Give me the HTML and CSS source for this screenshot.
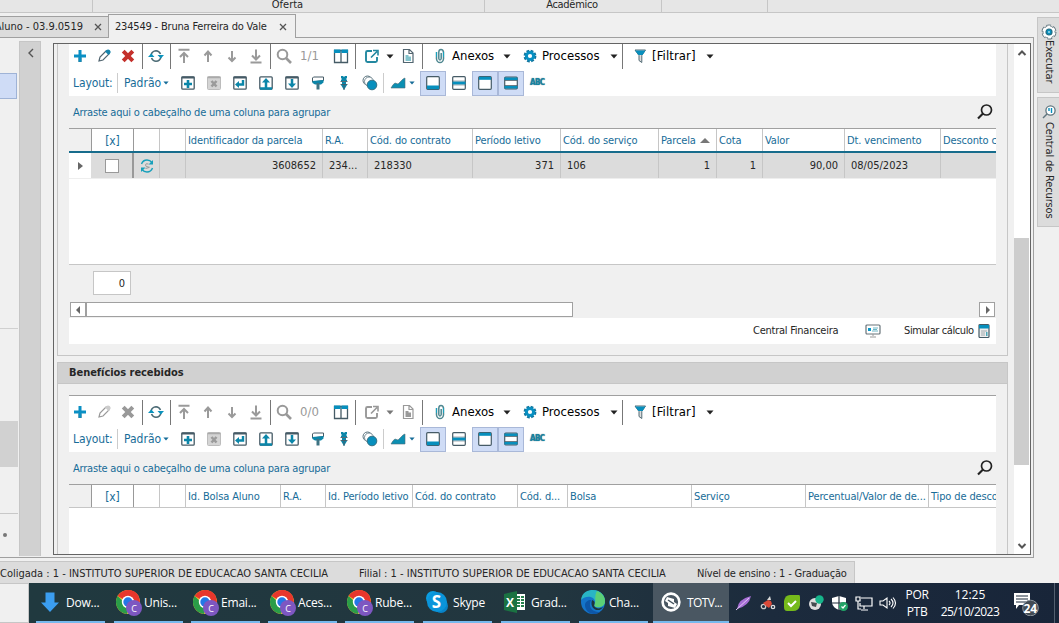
FILE: index.html
```
<!DOCTYPE html>
<html lang="pt-BR">
<head>
<meta charset="utf-8">
<title>234549 - Bruna Ferreira do Vale</title>
<link rel="stylesheet" href="styles.css">
</head>
<body>
<svg class="defs" aria-hidden="true">
  <symbol id="plus" viewBox="0 0 16 16"><path d="M8 2v12M2 8h12" stroke="#0a8fc4" stroke-width="3"/><path d="M6.5 9.5v4h3v-4" fill="none" stroke="#2c7f9b" stroke-width=".5"/></symbol>
  <symbol id="pencil" viewBox="0 0 16 16"><path d="M3 13l1-4 6-6q2-1 3 0t0 3l-6 6z" fill="#fff" stroke="currentColor" stroke-width="1.2"/><path class="tip" d="M9 3.5l1.500-1.500q2-1 3.500.500t0 3L12.500 7z"/></symbol>
  <symbol id="cross" viewBox="0 0 16 16"><path d="M3.200 3.200l9.600 9.600M12.800 3.200l-9.600 9.600" stroke="currentColor" stroke-width="4"/></symbol>
  <symbol id="refresh" viewBox="0 0 16 16"><path d="M3 7q1-4 5-4.300 3 0 4.500 3.300M13 9q-1 4-5 4.300-3 0-4.500-3.300" fill="none" stroke="#4b6a74" stroke-width="1.500"/><path d="M9.500 7h6.500l-3.200 3.500zM0 9h6.500L3.300 5.500z" fill="#0b93bd"/></symbol>
  <symbol id="up" viewBox="0 0 16 16"><path d="M8 14V4M4.500 7.500L8 3.500l3.500 4" fill="none" stroke="#9a9a9a" stroke-width="2"/></symbol>
  <symbol id="down" viewBox="0 0 16 16"><path d="M8 3v10M4.500 9.500L8 13l3.500-3.500" fill="none" stroke="#9a9a9a" stroke-width="2"/></symbol>
  <symbol id="first" viewBox="0 0 16 16"><path d="M2.500 1.800h11M8 15V5M4 9l4-4 4 4" fill="none" stroke="#9a9a9a" stroke-width="2"/></symbol>
  <symbol id="last" viewBox="0 0 16 16"><path d="M2.500 14.500h11M8 1.500v10M4 7.500l4 4 4-4" fill="none" stroke="#9a9a9a" stroke-width="2"/></symbol>
  <symbol id="mag" viewBox="0 0 16 16"><circle cx="6.500" cy="6.500" r="4.800" fill="none" stroke="#999" stroke-width="2"/><path d="M10 10l5 5" stroke="#999" stroke-width="2.600"/></symbol>
  <symbol id="cols" viewBox="0 0 16 16"><path d="M1.500 2.500h13v12h-13zM8 3v11" fill="#fff" stroke="#455b66" stroke-width="1.300"/><path d="M1 1.500h6.500V5H1zM8.500 1.500H15V5H8.500z" fill="#078fbd"/></symbol>
  <symbol id="export" viewBox="0 0 16 16"><path d="M8 3H3.500Q2 3 2 4.500v8Q2 14 3.500 14h8q1.500 0 1.500-1.500V9" fill="none" stroke="currentColor" stroke-width="1.900"/><path d="M7 9.500l6-6M9 2.500h5v5" fill="none" stroke="currentColor" stroke-width="1.600"/></symbol>
  <symbol id="doc" viewBox="0 0 16 16"><path d="M3.500 1.500h6l3.500 3.500v9.500H3.500zM9 2v3.500h4" fill="#fff" stroke="currentColor" stroke-width="1.200"/><path class="tip" d="M5.500 7h3v1.500H11V13H5.500z"/></symbol>
  <symbol id="clip" viewBox="0 0 16 16"><path d="M4.500 4v7q.500 3.500 3.500 3.500t3.500-3.500V4q-.500-2.500-2.500-2.500T6.800 4v6.500q.200 1.500 1.200 1.500t1.200-1.500V5" fill="none" stroke="#4f8790" stroke-width="1.500"/><path d="M4.500 4v5M11.500 4v5" stroke="#17a2bf" stroke-width="1"/></symbol>
  <symbol id="gear" viewBox="0 0 16 16"><circle cx="8" cy="8" r="5" fill="none" stroke="#11759d" stroke-width="2.800" stroke-dasharray="2.600 1.327"/><circle cx="8" cy="8" r="3.600" fill="none" stroke="#078fc2" stroke-width="3"/></symbol>
  <symbol id="funnel" viewBox="0 0 16 16"><path d="M3 2h10.500L9.800 7.500v7L7 12.500v-5z" fill="#ddd" stroke="#536b75"/><path d="M3 2.500h10.500L10.500 7h-4z" fill="#078fbd"/></symbol>
  <symbol id="caret" viewBox="0 0 8 5"><path d="M.500.500h7L4 4.500z" fill="currentColor"/></symbol>
  <symbol id="lnew" viewBox="0 0 16 16"><rect x="1.800" y="1.800" width="12.400" height="12.400" rx="1" fill="#fff" stroke="#465b66" stroke-width="1.300"/><path d="M1.500 2.500h13" stroke="#465b66" stroke-width="2"/><path d="M8 5v8M4 9h8" stroke="#0b86a9" stroke-width="2.600"/></symbol>
  <symbol id="ldel" viewBox="0 0 16 16"><rect x="1.500" y="1.500" width="13" height="13" rx="1" fill="#d4d4d4" stroke="#bcbcbc"/><path d="M1.500 2.500h13" stroke="#aaa" stroke-width="1.500"/><path d="M5.500 6l5 5.500M10.500 6l-5 5.500" stroke="#9b9b9b" stroke-width="2.600"/></symbol>
  <symbol id="lret" viewBox="0 0 16 16"><rect x="1.800" y="1.800" width="12.400" height="12.400" rx="1" fill="#fff" stroke="#465b66" stroke-width="1.300"/><path d="M1.500 2.500h13" stroke="#465b66" stroke-width="2"/><path d="M11 5v4.500H6" fill="none" stroke="#0b86a9" stroke-width="2.400"/><path d="M3 9.500L7 6v7z" fill="#0b86a9"/></symbol>
  <symbol id="lup" viewBox="0 0 16 16"><rect x="1.800" y="1.800" width="12.400" height="12.400" rx="1" fill="#fff" stroke="#465b66" stroke-width="1.300"/><path d="M2 13.500h12M8 13V7" stroke="#0b86a9" stroke-width="2.500"/><path d="M4 7.500L8 3l4 4.500z" fill="#0b86a9"/></symbol>
  <symbol id="ldown" viewBox="0 0 16 16"><rect x="1.800" y="1.800" width="12.400" height="12.400" rx="1" fill="#fff" stroke="#465b66" stroke-width="1.300"/><path d="M1.500 2.500h13" stroke="#465b66" stroke-width="2"/><path d="M8 4v5" stroke="#0b86a9" stroke-width="2.500"/><path d="M4 8.500L8 13l4-4.500z" fill="#0b86a9"/></symbol>
  <symbol id="brush" viewBox="0 0 16 16"><path d="M3.500 2h10v3.500l-11 1.500V3z" fill="#fff" stroke="#465b66"/><path d="M2.500 6L13.500 5v2.500L11 9.500H5L2.500 8z" fill="#0b86a9"/><path d="M8 8v6.500" stroke="#3e7383" stroke-width="3"/></symbol>
  <symbol id="pin" viewBox="0 0 16 16"><path d="M5 1h2l1 1 1-1h2v2L10 4l1 1v1H5V5l1-1-1-1zM6 7h4v2l1 1-3 5-3-5 1-1z" fill="#0b86a9"/><path d="M4.500 6.500h7M4.500 9.500h7M8 9v6" stroke="#465b66" stroke-width=".9"/></symbol>
  <symbol id="circles" viewBox="0 0 16 16"><circle cx="5.500" cy="5.500" r="4.500" fill="#fff" stroke="#58717c"/><circle cx="7" cy="6.500" r="4.500" fill="#fff" stroke="#58717c" stroke-width=".8"/><circle cx="10" cy="10" r="4.800" fill="#078fbd" stroke="#357083"/></symbol>
  <symbol id="chart" viewBox="0 0 16 16"><path d="M1 13q2-4 4-5l3 1 5-5 2-1v10z" fill="#0c8fb2" stroke="#4e6d79" stroke-width=".6"/></symbol>
  <symbol id="pbot" viewBox="0 0 16 16"><rect x="1.700" y="1.700" width="12.600" height="12.600" rx="1" fill="#fff" stroke="#465b66" stroke-width="1.200"/><path d="M2 10.500h12v3.700H2z" fill="#078fbd"/></symbol>
  <symbol id="pmid" viewBox="0 0 16 16"><rect x="1.700" y="1.700" width="12.600" height="12.600" rx="1" fill="#fff" stroke="#465b66" stroke-width="1.200"/><path d="M1.500 6.500h13v3h-13z" fill="#078fbd"/><path d="M1.500 6h13M1.500 10h13" stroke="#465b66" stroke-width=".5"/></symbol>
  <symbol id="ptop" viewBox="0 0 16 16"><rect x="1.700" y="1.700" width="12.600" height="12.600" rx="1" fill="#fff" stroke="#465b66" stroke-width="1.200"/><path d="M2 1.800h12v3H2z" fill="#078fbd"/></symbol>
  <symbol id="prows" viewBox="0 0 16 16"><rect x="1.700" y="2.200" width="12.600" height="11.600" rx="1" fill="#fff" stroke="#465b66" stroke-width="1.200"/><path d="M1.500 2.500h13V5h-13zM1.500 11h13v2.500h-13z" fill="#078fbd"/><path d="M2 5.500h12M2 10.500h12" stroke="#465b66" stroke-width=".8"/></symbol>
  <symbol id="find" viewBox="0 0 18 18"><circle cx="10.500" cy="7" r="5" fill="none" stroke="#222" stroke-width="1.700"/><path d="M7 10.500l-5 5" stroke="#222" stroke-width="2.200"/></symbol>
  <symbol id="chrome" viewBox="0 0 28 28"><circle cx="13" cy="13" r="12" fill="#fbc02d"/><path d="M13 13H25A12 12 0 0 0 2.600 7z" fill="#e8372c"/><path d="M13 1A12 12 0 0 1 24 8H13z" fill="#e8372c"/><path d="M2.600 7A12 12 0 0 0 12 25l3-10-5-1z" fill="#2a9d48"/><circle cx="13" cy="13" r="6.200" fill="#fff"/><circle cx="13" cy="13" r="4.700" fill="#2378e6"/><circle cx="19" cy="19" r="8" fill="#7d57c1"/></symbol>
</svg>

<div class="ribbon">
  <div class="rb rb1"></div><div class="rb rb2"><span>Oferta</span></div><div class="rb rb3"><span>Acadêmico</span></div><div class="rb rb4"></div>
</div>

<div class="workspace">
  <div class="doc">
    <div class="tabs">
      <div class="tab old"><span>Aluno - 03.9.0519</span><svg viewBox="0 0 8 8"><path d="M1 1l6 6M7 1L1 7"/></svg></div>
      <div class="tab cur"><span>234549 - Bruna Ferreira do Vale</span><svg viewBox="0 0 8 8"><path d="M1 1l6 6M7 1L1 7"/></svg></div>
      <div class="tabline"></div>
    </div>
    <div class="docbody">
      <div class="nav"><div class="nav-sel"></div><div class="nav-grey"></div><div class="nav-line"></div><div class="nav-dot"></div></div>
      <div class="collapse"><svg viewBox="0 0 8 10"><path d="M6 1L2 5l4 4"/></svg></div>
      <div class="frame">
        <div class="view">
          <section class="group g1">
            <div class="tools">
              <div class="row r1">
                <i class="add"><svg><use href="#plus"/></svg></i><i class="steel"><svg><use href="#pencil"/></svg></i><i class="red"><svg><use href="#cross"/></svg></i><b></b>
                <i><svg><use href="#refresh"/></svg></i><b></b>
                <i><svg><use href="#first"/></svg></i><i><svg><use href="#up"/></svg></i><i><svg><use href="#down"/></svg></i><i><svg><use href="#last"/></svg></i><b></b>
                <i><svg><use href="#mag"/></svg></i><span class="count">1/1</span><i><svg><use href="#cols"/></svg></i><b class="wide"></b>
                <i class="teal"><svg><use href="#export"/></svg></i><em><svg><use href="#caret"/></svg></em><i class="docu"><svg><use href="#doc"/></svg></i><b class="wide more"></b>
                <i><svg><use href="#clip"/></svg></i><span class="t anexos">Anexos</span><em class="e1"><svg><use href="#caret"/></svg></em>
                <i><svg><use href="#gear"/></svg></i><span class="t proc">Processos</span><em class="e2"><svg><use href="#caret"/></svg></em><b class="wide more"></b>
                <i><svg><use href="#funnel"/></svg></i><span class="t filt">[Filtrar]</span><em><svg><use href="#caret"/></svg></em>
              </div>
              <div class="row r2">
                <span class="lay">Layout:</span><u></u><span class="pad">Padrão</span><em class="blue"><svg><use href="#caret"/></svg></em>
                <i><svg><use href="#lnew"/></svg></i><i><svg><use href="#ldel"/></svg></i><i><svg><use href="#lret"/></svg></i><i><svg><use href="#lup"/></svg></i><i><svg><use href="#ldown"/></svg></i><i><svg><use href="#brush"/></svg></i><i><svg><use href="#pin"/></svg></i><i><svg><use href="#circles"/></svg></i><u class="tight"></u>
                <i class="chart"><svg><use href="#chart"/></svg></i><em class="blue e3"><svg><use href="#caret"/></svg></em>
                <i class="on"><svg><use href="#pbot"/></svg></i><i><svg><use href="#pmid"/></svg></i><i class="on"><svg><use href="#ptop"/></svg></i><i class="on"><svg><use href="#prows"/></svg></i><span class="abc">ABC</span>
              </div>
            </div>
            <div class="grouper"><span>Arraste aqui o cabeçalho de uma coluna para agrupar</span><svg><use href="#find"/></svg></div>
            <div class="grid grid1">
              <div class="hd cells"><div class="ind"></div><div class="xx">[x]</div><div></div><div></div><div>Identificador da parcela</div><div>R.A.</div><div>Cód. do contrato</div><div>Período letivo</div><div>Cód. do serviço</div><div class="sorted">Parcela<svg viewBox="0 0 10 5"><path d="M0 5L5 0l5 5z"/></svg></div><div>Cota</div><div>Valor</div><div>Dt. vencimento</div><div>Desconto c</div></div>
              <div class="data cells"><div class="ind"><svg viewBox="0 0 5 8"><path d="M0 0l5 4-5 4z"/></svg></div><div class="xx"><span class="check"></span></div><div class="sync"><svg viewBox="0 0 16 16"><path d="M2.500 6Q4 2 8 2q3 0 5 2.500M13.500 10Q12 14 8 14q-3 0-5-2.500" fill="none" stroke="#18a0bb" stroke-width="1.400"/><path d="M14 2v4.500H9.500zM2 14V9.500h4.500z" fill="#18a0bb"/><path d="M9.500 6Q6.500 5 6.500 7t3 2-3 1.500" fill="none" stroke="#999" stroke-width="1"/></svg></div><div></div><div class="num">3608652</div><div>234...</div><div>218330</div><div class="num">371</div><div>106</div><div class="num">1</div><div class="num">1</div><div class="num">90,00</div><div>08/05/2023</div><div></div></div>
            </div>
            <div class="foot"><div class="total">0</div>
              <div class="hscroll"><span class="arr"><svg viewBox="0 0 5 8"><path d="M4 0L0 4l4 4z"/></svg></span><span class="hthumb"></span><span class="arr end"><svg viewBox="0 0 5 8"><path d="M1 0l4 4-4 4z"/></svg></span></div>
            </div>
            <div class="actions"><span class="cf">Central Financeira</span>
              <svg class="mon" viewBox="0 0 16 14"><rect x="1" y="1" width="14" height="9" rx="1" fill="#fff" stroke="#68747a" stroke-width="1.200"/><path d="M3 4h3v3H3z" fill="#0a98c8"/><path d="M8 4h5M7 7h6M8 5.500h4" stroke="#6cb7c7"/><path d="M8 10v2M5 13h6" stroke="#999"/></svg>
              <span class="sc">Simular cálculo</span>
              <svg class="calc" viewBox="0 0 12 16"><rect x="1" y="1.500" width="10" height="13" rx="1" fill="#eee" stroke="#455b66" stroke-width="1.200"/><path d="M1 2h10v3.500H1z" fill="#078fbd"/><path d="M3 8h6M3 10h4M3 12h4" stroke="#8a979c" stroke-width=".8"/><path d="M8 9h1.500v4H8z" fill="#4ca8ba"/></svg>
            </div>
          </section>
          <section class="group g2">
            <h2>Benefícios recebidos</h2>
            <div class="tools">
              <div class="row r1">
                <i class="add"><svg><use href="#plus"/></svg></i><i class="dis hollow"><svg><use href="#pencil"/></svg></i><i class="dis"><svg><use href="#cross"/></svg></i><b></b>
                <i><svg><use href="#refresh"/></svg></i><b></b>
                <i><svg><use href="#first"/></svg></i><i><svg><use href="#up"/></svg></i><i><svg><use href="#down"/></svg></i><i><svg><use href="#last"/></svg></i><b></b>
                <i><svg><use href="#mag"/></svg></i><span class="count">0/0</span><i><svg><use href="#cols"/></svg></i><b class="wide"></b>
                <i class="dis"><svg><use href="#export"/></svg></i><em class="dim"><svg><use href="#caret"/></svg></em><i class="docu dis"><svg><use href="#doc"/></svg></i><b class="wide more"></b>
                <i><svg><use href="#clip"/></svg></i><span class="t anexos">Anexos</span><em class="e1"><svg><use href="#caret"/></svg></em>
                <i><svg><use href="#gear"/></svg></i><span class="t proc">Processos</span><em class="e2"><svg><use href="#caret"/></svg></em><b class="wide more"></b>
                <i><svg><use href="#funnel"/></svg></i><span class="t filt">[Filtrar]</span><em><svg><use href="#caret"/></svg></em>
              </div>
              <div class="row r2">
                <span class="lay">Layout:</span><u></u><span class="pad">Padrão</span><em class="blue"><svg><use href="#caret"/></svg></em>
                <i><svg><use href="#lnew"/></svg></i><i><svg><use href="#ldel"/></svg></i><i><svg><use href="#lret"/></svg></i><i><svg><use href="#lup"/></svg></i><i><svg><use href="#ldown"/></svg></i><i><svg><use href="#brush"/></svg></i><i><svg><use href="#pin"/></svg></i><i><svg><use href="#circles"/></svg></i><u class="tight"></u>
                <i class="chart"><svg><use href="#chart"/></svg></i><em class="blue e3"><svg><use href="#caret"/></svg></em>
                <i class="on"><svg><use href="#pbot"/></svg></i><i><svg><use href="#pmid"/></svg></i><i class="on"><svg><use href="#ptop"/></svg></i><i class="on"><svg><use href="#prows"/></svg></i><span class="abc">ABC</span>
              </div>
            </div>
            <div class="grouper"><span>Arraste aqui o cabeçalho de uma coluna para agrupar</span><svg><use href="#find"/></svg></div>
            <div class="grid grid2">
              <div class="hd cells"><div class="ind"></div><div class="xx">[x]</div><div></div><div></div><div>Id. Bolsa Aluno</div><div>R.A.</div><div>Id. Período letivo</div><div>Cód. do contrato</div><div>Cód. d...</div><div>Bolsa</div><div>Serviço</div><div>Percentual/Valor de de...</div><div>Tipo de desco</div></div>
            </div>
          </section>
        </div>
        <div class="vscroll"><svg viewBox="0 0 10 6"><path d="M1.500 5L5 1.500 8.500 5"/></svg><div class="vthumb"></div><svg viewBox="0 0 10 6"><path d="M1.500 1L5 4.500 8.500 1"/></svg></div>
      </div>
    </div>
  </div>
  <div class="dock">
    <div class="dtab d1"><svg viewBox="0 0 16 16"><circle cx="8" cy="8" r="6" fill="none" stroke="#60757e" stroke-width="3" stroke-dasharray="4.300 1.983"/><circle cx="8" cy="8" r="6" fill="#fff" stroke="#60757e" stroke-width=".8"/><circle cx="8" cy="8" r="5.800" fill="none" stroke="#fff" stroke-width="1.600" stroke-dasharray="3.300 2.774" stroke-dashoffset="-.5"/><circle cx="8" cy="8" r="3" fill="#078fbd" stroke="#246d83" stroke-width="1.200"/><circle cx="8" cy="8" r="1" fill="#9fdcec"/></svg><span>Executar</span></div>
    <div class="dtab d2"><svg viewBox="0 0 16 16"><circle cx="9.500" cy="6.500" r="4.600" fill="#fff" stroke="#60757e" stroke-width="1.300"/><path d="M6 10l-4 4" stroke="#60757e" stroke-width="1.500"/><path d="M8 4v3M10.500 4v5" stroke="#078fbd" stroke-width="1.400"/></svg><span>Central de Recursos</span></div>
  </div>
</div>

<div class="status"><span class="s1">Coligada : 1 - INSTITUTO SUPERIOR DE EDUCACAO SANTA CECILIA</span><span class="s2">Filial : 1 - INSTITUTO SUPERIOR DE EDUCACAO SANTA CECILIA</span><span class="s3">Nível de ensino : 1 - Graduação</span></div>

<div class="bottom"><div class="stub"></div>
<div class="taskbar">
  <div class="app"><svg viewBox="0 0 28 28"><path d="M9.500 4.500h9v10H23L14 24 5 14.500h4.500z" fill="#3b9ef0"/></svg><span>Dow...</span></div>
  <div class="app n ch"><svg><use href="#chrome"/><text x="16.200" y="22.500" class="badge">C</text></svg><span>Unis...</span></div>
  <div class="app ch"><svg><use href="#chrome"/><text x="16.200" y="22.500" class="badge">C</text></svg><span>Emai...</span></div>
  <div class="app ch"><svg><use href="#chrome"/><text x="16.200" y="22.500" class="badge">C</text></svg><span>Aces...</span></div>
  <div class="app ch"><svg><use href="#chrome"/><text x="16.200" y="22.500" class="badge">C</text></svg><span>Rube...</span></div>
  <div class="app n"><svg viewBox="0 0 28 28"><circle cx="10" cy="10" r="7" fill="#0b9de0"/><circle cx="18" cy="18" r="7" fill="#0883c8"/><circle cx="14" cy="14" r="10" fill="#0a94da"/><text x="8.800" y="20" class="sk">S</text></svg><span>Skype</span></div>
  <div class="app n"><svg viewBox="0 0 28 28"><path d="M15 6h9v16h-9z" fill="#fff"/><path d="M16 8h3v2h-3zm4 0h3v2h-3zm-4 3h3v2h-3zm4 0h3v2h-3zm-4 3h3v2h-3zm4 0h3v2h-3zm-4 3h3v2h-3zm4 0h3v2h-3z" fill="#24804c"/><path d="M3 6l13-3v22L3 22z" fill="#1b7242"/><text x="5" y="18.500" class="xl">X</text></svg><span>Grad...</span></div>
  <div class="app n"><svg viewBox="0 0 28 28"><circle cx="14" cy="14" r="12" fill="#1474c9"/><path d="M2 12C3 4 9 2 14 2c8 0 12 6 12 11s-4 7-9 6c-2-1-2-2-1-4 1-6-8-9-14-3z" fill="#29b5c5"/><path d="M18 3c6 2 8 7 8 10 0 5-4 7-9 6-2-1-2-2-1-4 1-3-1-7 2-12z" fill="#5ccf76"/><path d="M12 12c-3 6 0 12 9 12-7 5-15 0-15-7 0-3 3-5 6-5z" fill="#0d56a7"/><path d="M13 12c3 1 3 3 2 6 2 3 6 3 9 1-3 6-14 3-11-7z" fill="#1e343d"/></svg><span>Cha...</span></div>
  <div class="app active"><svg viewBox="0 0 28 28"><circle cx="14" cy="14" r="8.400" fill="none" stroke="#fff" stroke-width="2.600"/><path d="M10 9l7 2v3l3 2-2 4-7-2v-3l-3-2z" fill="#fff"/><path d="M11 12l6 4" stroke="#46545f" stroke-width="1.500"/></svg><span>TOTV...</span></div>
  <div class="tray">
    <svg viewBox="0 0 18 18"><path d="M2 15Q3 5 16 2 14 12 2 15z" fill="#a66ed5"/><path d="M1 16L14 4" stroke="#e3c9f5" stroke-width="1"/></svg>
    <svg viewBox="0 0 18 18"><circle cx="4.500" cy="12.500" r="2.200" fill="none" stroke="#ccc" stroke-width="1.300"/><circle cx="14" cy="13" r="1.700" fill="none" stroke="#ddd" stroke-width="1.300"/><path d="M4 9l5-3 3 1 1 3-3 4-3-2z" fill="#d94938"/><path d="M8 6l3-4 1 4z" fill="#d9d9d9"/></svg>
    <svg viewBox="0 0 18 18"><path d="M7 1h9q1 0 1 2v8q-1 6-7 6H4q-3 0-3-4V7q1-6 6-6z" fill="#76ba1b"/><path d="M5 9l3 3 5-5" fill="none" stroke="#fff" stroke-width="2"/></svg>
    <svg viewBox="0 0 18 18"><circle cx="8" cy="10" r="6" fill="#ddd"/><path d="M4 8l6 1-1 4-4-1z" fill="#454c50"/><circle cx="12.500" cy="5.500" r="4.200" fill="#16b58b"/></svg>
    <svg viewBox="0 0 18 18"><path d="M8 2l7 2v5q-1 5-7 7-6-2-7-7V4z" fill="#fff"/><path d="M8 2v14M1 9h14" stroke="#1e2d3b" stroke-width="1.200"/><circle cx="12.500" cy="12.500" r="4.500" fill="#21a366"/><path d="M10.500 12.500l1.500 1.500 2.500-3" fill="none" stroke="#fff" stroke-width="1.200"/></svg>
    <svg viewBox="0 0 18 18"><path d="M6 4h11v8H5V9M9 12v3M6 16h7M1 3h4v4H1zM3 7v8h3" fill="none" stroke="#fff" stroke-width="1.200"/></svg>
    <svg viewBox="0 0 18 18"><path d="M1 7h3l4-3v10l-4-3H1zM10 7q2 2 0 4M12 5q4 4 0 8M14 3.500q5 5.500 0 11" fill="none" stroke="#fff" stroke-width="1.100"/></svg>
    <div class="lang"><span>POR</span><span>PTB</span></div>
    <div class="clock"><span>12:25</span><span class="date">25/10/2023</span></div>
    <div class="notif"><svg viewBox="0 0 30 26"><path d="M1 3h16v12H6l-3 4v-4H1z" fill="#fff"/><path d="M3 6h12M3 9h12M3 12h12" stroke="#1b2a3c" stroke-width="1.200"/><circle cx="17.500" cy="18" r="7.800" fill="#424b55" stroke="#8c949c"/><text x="10.500" y="22.500" class="nb">24</text></svg></div>
  </div>
</div></div>
</body>
</html>
```
FILE: styles.css
```
* { box-sizing: border-box; }
body { margin: 0; width: 1059px; height: 623px; overflow: hidden; background: #f0f0f0; color: #262626; font: 11px/14px "DejaVu Sans Condensed", "DejaVu Sans", sans-serif; font-stretch: condensed; display: flex; flex-direction: column; white-space: nowrap; }
svg { display: block; flex: none; }
.defs { position: absolute; width: 0; height: 0; }
i, em { font-style: normal; }

.ribbon { height: 13px; flex: none; display: flex; background: #e6e6e6; border-bottom: 1px solid #c6c6c6; }
.rb { border-right: 1px solid #c6c6c6; text-align: center; line-height: 9px; }
.rb1 { width: 93px; }
.rb2 { width: 392px; padding-right: 2px; }
.rb3 { width: 177px; padding-right: 2px; letter-spacing: -.3px; }
.rb4 { width: 106px; }

.workspace { height: 548px; flex: none; display: flex; }
.doc { width: 1034px; height: 545px; border-right: 1px solid #a0a0a0; border-bottom: 1px solid #a0a0a0; background: #f0f0f0; }
.tabs { height: 25px; display: flex; align-items: flex-end; margin-right: -1px; background: #f0f0f0; }
.tab { display: flex; align-items: center; border: 1px solid #a0a0a0; }
.tab svg { width: 8px; height: 8px; fill: none; stroke: #555; stroke-width: 1.3; }
.tab.old { width: 108px; height: 22px; justify-content: flex-end; background: #dcdcdc; border-left: 0; border-right: 0; padding-right: 6px; gap: 11px; }
.tab.cur { width: 188px; height: 24px; border-bottom: 0; padding-left: 6px; gap: 12px; }
.tab.cur span { letter-spacing: -.19px; }
.tabline { flex: 1; border-bottom: 1px solid #a0a0a0; height: 1px; }
.docbody { display: flex; height: 518px; }
.nav { width: 19px; height: 518px; display: flex; flex-direction: column; margin-top: 3px; }
.nav-sel { height: 26px; margin-top: 32px; width: 17px; background: #cfdcf6; border: 1px solid #9fb3d6; border-left: 0; }
.nav-grey { margin-top: 229px; border-top: 1px solid #d0d0d0; height: 139px; width: 18px; background: linear-gradient(#f0f0f0 92px, #d1d1d1 92px); }
.nav-line { height: 47px; width: 18px; border-bottom: 1px solid #c8c8c8; }
.nav-dot { width: 4px; height: 4px; border-radius: 2px; background: #777; margin: 19px 0 0 3px; }
.collapse { width: 22px; height: 515px; margin-top: 3px; background: #d1d1d1; border: 1px solid #c6c6c6; border-width: 1px 1px 0; padding: 6px 0 0 7px; }
.collapse svg { width: 8px; height: 10px; fill: none; stroke: #555; stroke-width: 1.4; }
.frame { margin: 5px 0 0 12px; width: 978px; height: 512px; border: 1px solid #646464; display: flex; justify-content: space-between; }
.view { width: 954px; height: 510px; padding-left: 3px; overflow: hidden; }
.group { border: 1px solid #c6c6c6; width: 951px; padding: 0 11px; }
.g1 { height: 312px; border-top: 0; }
.g2 { height: 220px; margin-top: 6px; }
.g2 h2 { margin: 0 -11px 11px; padding-left: 11px; height: 21px; border-bottom: 1px solid #c6c6c6; background: #d1d1d1; font-size: 11px; line-height: 20px; letter-spacing: -.05px; }
.tools { background: #fff; height: 52px; }
.g2 .tools { height: 57px; border-top: 1px solid #a0a0a0; padding-top: 4px; }
.row { display: flex; align-items: center; }
.r1 { height: 24px; color: #222; font-size: 13px; }
.r2 { height: 26px; margin-top: 2px; color: #176c98; font-size: 12px; }
.row i { width: 24px; height: 24px; flex: none; display: flex; align-items: center; justify-content: center; }
.row i svg { width: 16px; height: 16px; }
.row .add { margin-left: -1px; }
.row b { width: 1px; height: 25px; background: #777; margin: 0 1px 0 2px; flex: none; }
.row b.wide { margin-right: 4px; }
.row b.more { margin-right: 5px; }
.row em { width: 12px; flex: none; display: flex; justify-content: center; }
.row em svg { width: 8px; height: 5px; }
.row .red { color: #c4302b; }
.steel { color: #526570; fill: #1683aa; }
.teal { color: #2388a0; }
.dis { color: #999; fill: #999; }
.hollow { fill: #ccc; }
.dim { color: #777; }
.docu { color: #526570; fill: #83c3cc; }
.docu.dis { color: #999; fill: #999; }
.count { width: 33px; padding-left: 4px; color: #999; }
.t { color: #000; }
.anexos { width: 49px; }
.proc { width: 66px; }
.filt { width: 52px; letter-spacing: .1px; }
.e1 { margin-right: 5px; }
.lay { width: 46px; padding-left: 4px; letter-spacing: -.1px; }
.row u { width: 1px; height: 20px; background: #ccc; margin: 0 2px; flex: none; }
.row u.tight { margin-left: 0; }
.pad { width: 40px; padding-left: 4px; }
.row .blue { color: #176c98; width: 15px; justify-content: flex-start; padding-left: 3px; }
.row .blue svg { width: 6px; height: 4px; }
.r2 i { width: 26px; height: 25px; }
.r2 .chart { width: 23px; }
.row .e3 { width: 8px; margin-right: 3px; padding-left: 0; }
.r2 .on { background: #cfdcf6; border: 1px solid #a9b8d8; }
.abc { font-size: 8px; font-weight: bold; color: #1683a3; text-shadow: 0 0 1px #345b69; margin-left: 6px; letter-spacing: -.6px; }
.grouper { height: 32px; display: flex; align-items: center; justify-content: space-between; padding: 0 2px 0 4px; color: #176c98; font-size: 11px; letter-spacing: -.21px; }
.grouper span { padding-top: 2px; }
.grouper svg { width: 18px; height: 18px; }

.grid { background: #fff; border-top: 1px solid #a0a0a0; }
.grid1 { height: 137px; border-bottom: 1px solid #c6c6c6; }
.grid2 { height: 80px; }
.cells { display: grid; overflow: hidden; }
.grid1 .cells { grid-template-columns: 23px 42px 26px 26px 137px 45px 105px 88px 98px 58px 46px 82px 96px 55px; }
.grid2 .cells { grid-template-columns: 23px 42px 26px 26px 95px 45px 87px 105px 50px 124px 114px 123px 67px; }
.cells > div { border-right: 1px solid #c6c6c6; padding-left: 2px; overflow: hidden; display: flex; align-items: center; }
.cells > div:last-child { border-right: 0; }
.hd { height: 23px; border-bottom: 1px solid #c6c6c6; color: #176c98; letter-spacing: -.13px; }
.hd > div { padding-top: 2px; }
.grid1 .hd { height: 24px; border-bottom: 2px solid #176c8c; }
.cells .ind { border-right-color: #999; padding: 0; justify-content: center; }
.hd .ind { background: #f0f0f0; }
.cells .xx { justify-content: center; border-right-color: #999; padding-left: 0; font-size: 12px; }
.data { height: 26px; background: #dcdcdc; border-bottom: 1px solid #eee; }
.data > div { padding-left: 6px; }
.data .num { justify-content: flex-end; padding-right: 6px; }
.data .ind { background: #fff; border-right-color: #dcdcdc; }
.data .xx { border-right-width: 2px; }
.ind svg { width: 5px; height: 8px; fill: #666; }
.check { width: 14px; height: 14px; border: 1px solid #999; background: #fff; }
.data .sync { padding-left: 5px; }
.sync svg { width: 16px; height: 16px; }
.cells .sorted { gap: 4px; }
.sorted svg { width: 10px; height: 5px; fill: #777; margin-top: -2px; }
.foot { height: 53px; display: flex; flex-direction: column; padding: 6px 1px 0; }
.total { margin-left: 23px; width: 38px; height: 24px; border: 1px solid #c6c6c6; background: #fff; text-align: right; padding: 5px 5px 0 0; }
.hscroll { display: flex; margin-top: 7px; }
.arr { width: 16px; height: 15px; border: 1px solid #a0a0a0; background: #fff; display: flex; align-items: center; justify-content: center; }
.arr svg { width: 5px; height: 8px; fill: #666; }
.hthumb { width: 487px; height: 15px; border: 1px solid #a0a0a0; background: #fff; }
.end { margin-left: auto; }
.actions { height: 26px; background: #fff; display: flex; align-items: center; padding-left: 684px; }
.cf { width: 112px; letter-spacing: -.25px; }
.mon { width: 16px; height: 14px; }
.sc { width: 74px; margin-left: 23px; letter-spacing: -.4px; }
.calc { width: 12px; height: 16px; }
.vscroll { width: 16px; background: #fff; display: flex; flex-direction: column; align-items: center; justify-content: space-between; padding: 6px 1px 5px 0; }
.vscroll svg { width: 10px; height: 6px; fill: none; stroke: #555; stroke-width: 2; }
.vthumb { width: 15px; height: 227px; background: #cdcdcd; margin-top: 104px; }

.dock { width: 25px; padding: 4px 0 0 3px; }
.dtab { width: 23px; background: #dcdcdc; border: 1px solid #c6c6c6; display: flex; flex-direction: column; align-items: center; }
.dtab span { writing-mode: vertical-rl; line-height: 14px; }
.dtab svg { width: 16px; height: 16px; }
.d1 { height: 76px; padding-top: 6px; }
.d2 { height: 130px; margin-top: 4px; padding-top: 6px; }
.d2 span { margin-top: 2px; letter-spacing: -.15px; }

.status { width: 855px; height: 22px; flex: none; background: #dcdcdc; border: 1px solid #c6c6c6; border-left: 0; border-bottom: 0; display: flex; align-items: center; padding-top: 2px; }
.s1 { width: 359px; }
.s2 { width: 338px; }
.s3 { letter-spacing: -.2px; }
.bottom { display: flex; height: 40px; }
.stub { width: 29px; background: #f0f0f0; border: 1px solid #c6c6c6; border-left: 0; }
.taskbar { width: 1030px; display: flex; padding-left: 7px; background: linear-gradient(90deg, #20393f, #22363f 50%, #1c2b3d 72%, #182539); color: #fff; font: 12px/16px "Open Sans", "Noto Sans", sans-serif; font-stretch: normal; }
.app { width: 69px; height: 40px; margin-right: 8px; display: flex; align-items: center; border-bottom: 2px solid #76b9ed; flex: none; }
.app + .n, .app:first-child, .app:nth-child(5) { margin-right: 9px; }
.app:nth-child(2) { margin-right: 8px; }
.app svg { width: 28px; height: 28px; }
.app.ch svg { margin: 2px -1px 0 1px; }
.app span { margin: 2px 0 0 2px; letter-spacing: -.2px; }
.app.active { width: 76px; margin: 0 5px 0 -4px; padding-left: 4px; background: #4a5762; }
.app.active span { letter-spacing: -.6px; }
.badge { fill: #fff; font: 9px "Open Sans", sans-serif; }
.sk { fill: #fff; font: bold 17px "Open Sans", sans-serif; }
.xl { fill: #fff; font: bold 12px "Open Sans", sans-serif; }
.nb { fill: #fff; font: bold 12px "Open Sans", sans-serif; }
.tray { display: flex; align-items: center; gap: 6px; padding-left: 1px; flex: 1; border-right: 1px solid #536070; margin-right: 4px; }
.tray > svg { width: 18px; height: 18px; }
.lang, .clock { display: flex; flex-direction: column; text-align: center; line-height: 17px; }
.lang { width: 28px; letter-spacing: -.3px; }
.clock { width: 66px; }
.date { letter-spacing: -.5px; }
.notif { margin-left: 4px; }
.notif svg { width: 30px; height: 26px; }
```
